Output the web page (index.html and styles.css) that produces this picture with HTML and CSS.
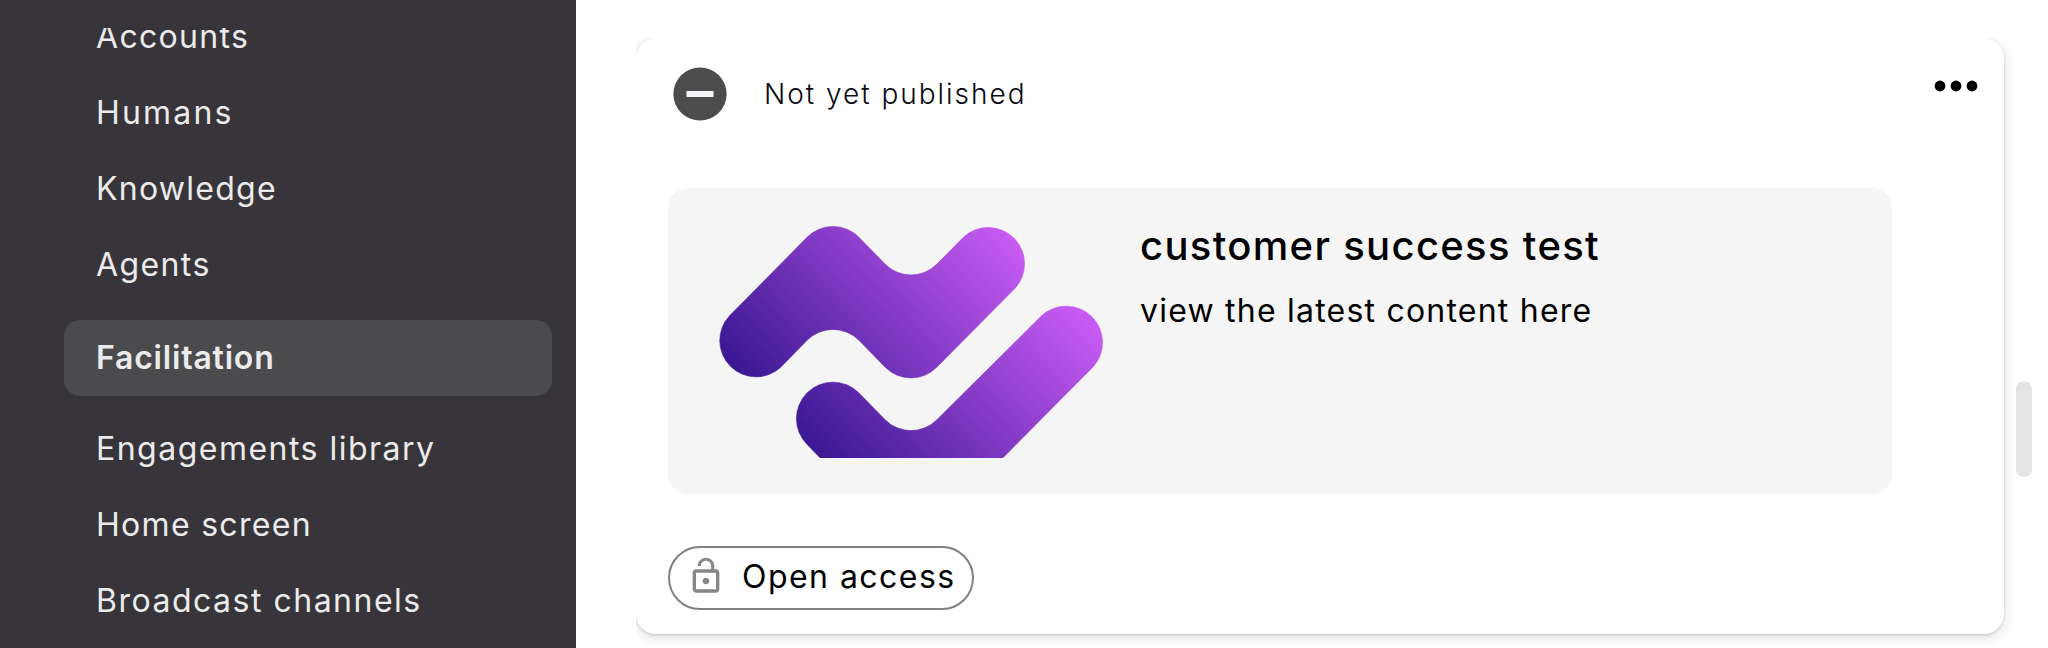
FILE: index.html
```html
<!DOCTYPE html>
<html lang="en">
<head>
<meta charset="utf-8">
<title>Facilitation</title>
<link rel="stylesheet" href="styles.css">
</head>
<body>
<div class="app">
  <aside class="sidebar">
    <nav class="nav">
      <a class="nav-item accounts">Accounts</a>
      <a class="nav-item humans">Humans</a>
      <a class="nav-item knowledge">Knowledge</a>
      <a class="nav-item agents">Agents</a>
      <a class="nav-item active">Facilitation</a>
      <a class="nav-item library">Engagements library</a>
      <a class="nav-item home">Home screen</a>
      <a class="nav-item channels">Broadcast channels</a>
    </nav>
  </aside>
  <main class="content">
    <article class="card">
      <header class="card-header">
        <svg class="status-icon" viewBox="0 0 54 54"><circle cx="27" cy="27" r="26.6" fill="#4c4c4c"/><rect x="13.5" y="24" width="27" height="6" fill="#f5f3f7"/></svg>
        <span class="status">Not yet published</span>
        <svg class="more" viewBox="0 0 44 12"><circle cx="6" cy="6" r="5.4"/><circle cx="22" cy="6" r="5.4"/><circle cx="38" cy="6" r="5.4"/></svg>
      </header>
      <section class="preview">
        <svg class="logo" viewBox="174 138 1158 696">
          <defs>
            <linearGradient id="upper" gradientUnits="userSpaceOnUse" x1="230" y1="570" x2="854" y2="-28"><stop offset="0" stop-color="#3b1893"/><stop offset="1" stop-color="#c65af2"/></linearGradient>
            <linearGradient id="lower" gradientUnits="userSpaceOnUse" x1="480" y1="834" x2="1100" y2="240"><stop offset="0" stop-color="#3b1893"/><stop offset="1" stop-color="#c65af2"/></linearGradient>
          </defs>
          <path fill="url(#upper)" stroke="url(#upper)" stroke-width="2" d="M208 408L442 171A109 109 0 0 1 596 171L676 253A109 109 0 0 0 830 253L911 171A109 109 0 0 1 1065 325L830 562A109 109 0 0 1 676 562L596 480A109 109 0 0 0 442 480L362 562A109 109 0 0 1 208 408Z"/>
          <path fill="url(#lower)" stroke="url(#lower)" stroke-width="2" d="M482 835L442 794A109 109 0 0 1 596 638L676 720A109 109 0 0 0 830 720L1145 407A109 109 0 0 1 1299 561L1027 835Z"/>
        </svg>
        <div class="preview-text">
          <h2 class="title">customer success test</h2>
          <p class="subtitle">view the latest content here</p>
        </div>
      </section>
      <div class="access">
        <svg class="lock" viewBox="0 0 24 24"><path d="M12 17c1.1 0 2-.9 2-2s-.9-2-2-2-2 .9-2 2 .9 2 2 2zm6-9h-1V6c0-2.76-2.24-5-5-5S7 3.24 7 6h1.9c0-1.71 1.39-3.1 3.1-3.1 1.71 0 3.1 1.39 3.1 3.1v2H6c-1.1 0-2 .9-2 2v10c0 1.1.9 2 2 2h12c1.1 0 2-.9 2-2V10c0-1.1-.9-2-2-2zm0 12H6V10h12v10z"/></svg>
        <span class="access-label">Open access</span>
      </div>
    </article>
    <div class="scroll-thumb"></div>
  </main>
</div>
</body>
</html>
```
FILE: styles.css
```css
* { box-sizing: border-box; }
body { margin: 0; font-family: Inter, sans-serif; background: #fff; color: #000; }
.app { display: flex; height: 648px; overflow: hidden; }

.sidebar { width: 576px; flex: none; padding-top: 28px; background: #37353a; }
.nav { height: 620px; padding: 0 24px 0 64px; overflow: hidden; }
.nav-item { display: block; height: 76px; padding-left: 32px; border-radius: 16px; font-size: 32px; line-height: 74px; color: #ebebeb; white-space: nowrap; }
.nav-item:first-child { margin-top: -28px; }
.nav-item.active { margin: 16px 0; font-weight: 600; line-height: 75px; letter-spacing: .8px; background: #4b4a4c; }
.accounts { letter-spacing: 1.3px; }
.humans { letter-spacing: 2.2px; }
.knowledge { letter-spacing: 1.27px; }
.agents { letter-spacing: 1.4px; }
.library { letter-spacing: 1.48px; }
.home { letter-spacing: 1.3px; }
.channels { letter-spacing: 1.5px; }

.content { display: flex; flex: 1; margin: 38px 0 0 60px; overflow: hidden; }
.card { width: 1368px; height: 596px; flex: none; padding: 0 32px; border-radius: 20px; background: #fff; box-shadow: 0 1px 3px rgba(0,0,0,.16), 0 4px 14px rgba(0,0,0,.12); }
.card-header { display: flex; align-items: flex-start; height: 150px; margin-right: -8px; }
.status-icon { width: 54px; height: 54px; margin: 29px 0 0 5px; }
.status { margin: 36px auto 0 37px; font-size: 28px; font-weight: 300; line-height: 40px; letter-spacing: 1.98px; color: #090912; }
.more { width: 44px; height: 12px; margin: 42px 2px 0 0; }

.preview { display: flex; width: 1224px; height: 306px; padding: 38px 50px; border-radius: 20px; background: #f5f5f5; }
.logo { width: 386px; height: 232px; flex: none; }
.preview-text { margin-left: 36px; white-space: nowrap; }
.title { margin: -4px 0 0; font-size: 40px; font-weight: 500; line-height: 48px; letter-spacing: 1.33px; }
.subtitle { margin: 22px 0 0; font-size: 32px; font-weight: 400; line-height: 38px; letter-spacing: 1.22px; }

.access { display: inline-flex; align-items: center; width: 306px; height: 64px; margin-top: 52px; padding-left: 16px; border: 2px solid #808080; border-radius: 32px; white-space: nowrap; }
.lock { width: 40px; height: 40px; margin-top: -4px; fill: #868686; }
.access-label { margin: -2px 0 0 16px; font-size: 32px; font-weight: 400; line-height: 40px; letter-spacing: 1.46px; }

.scroll-thumb { width: 16px; height: 96px; margin: 343px 0 0 12px; border-radius: 8px; background: #e4e4e4; }
```
